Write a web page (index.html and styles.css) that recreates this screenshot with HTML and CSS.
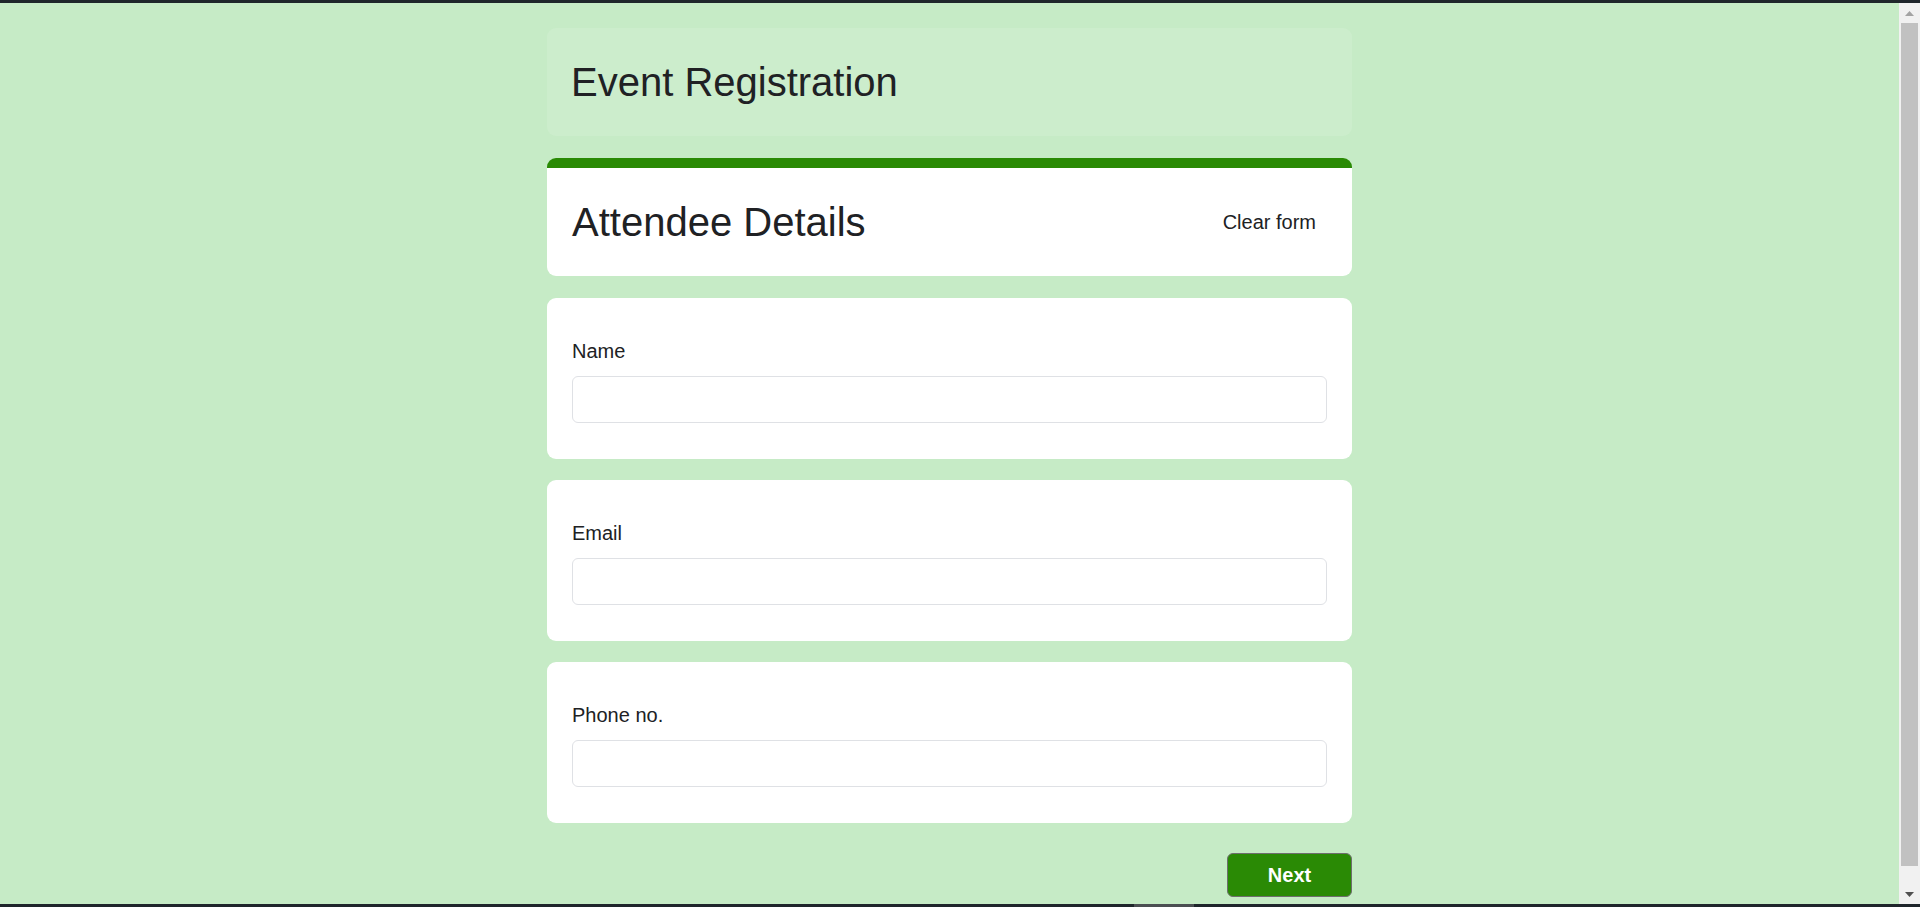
FILE: index.html
```html
<!DOCTYPE html>
<html lang="en">
<head>
<meta charset="utf-8">
<title>Event Registration</title>
<link rel="stylesheet" href="styles.css">
</head>
<body>
<div class="frame-top"></div>
<div class="screen">
  <main class="page">
    <div class="form">
      <header class="form-header">
        <h1 class="form-title">Event Registration</h1>
      </header>
      <section class="card section-card">
        <h2 class="section-title">Attendee Details</h2>
        <button class="clear-btn" type="button">Clear form</button>
      </section>
      <div class="card question">
        <label class="q-label" for="name">Name</label>
        <input class="q-input" id="name" type="text">
      </div>
      <div class="card question">
        <label class="q-label" for="email">Email</label>
        <input class="q-input" id="email" type="email">
      </div>
      <div class="card question">
        <label class="q-label" for="phone">Phone no.</label>
        <input class="q-input" id="phone" type="tel">
      </div>
      <div class="actions">
        <button class="next-btn" type="button">Next</button>
      </div>
    </div>
  </main>
  <div class="scrollbar">
    <div class="sb-btn">
      <svg width="9" height="5" viewBox="0 0 9 5"><polygon points="0,5 4.5,0 9,5" fill="#a3a3a3"/></svg>
    </div>
    <div class="sb-track"><div class="sb-thumb"></div></div>
    <div class="sb-btn">
      <svg width="9" height="5" viewBox="0 0 9 5"><polygon points="0,0 9,0 4.5,5" fill="#505050"/></svg>
    </div>
  </div>
</div>
<div class="frame-bottom"><span class="task-item"></span></div>
</body>
</html>
```

FILE: styles.css
```css
html, body {
  margin: 0;
  height: 100%;
}
body {
  display: flex;
  flex-direction: column;
  height: 100vh;
  overflow: hidden;
  background: #1f262b;
  font-family: "Liberation Sans", Arial, sans-serif;
  color: #202124;
}
.frame-top {
  flex: none;
  height: 3px;
  background: #1f262b;
}
.frame-bottom {
  flex: none;
  height: 3px;
  background: #1f262b;
  display: flex;
}
.task-item {
  margin-left: 1134px;
  width: 60px;
  background: #4b4f52;
}
.screen {
  flex: 1;
  min-height: 0;
  display: flex;
}
.page {
  flex: 1;
  background: #c6ebc6;
  overflow: hidden;
  padding-top: 25px;
}
.form {
  width: 805px;
  margin: 0 auto;
  display: flex;
  flex-direction: column;
}
.form-header {
  background: #ccedcc;
  border-radius: 9px;
  padding: 31px 24px;
  margin-bottom: 22px;
}
.form-title {
  margin: 0;
  font-size: 40px;
  font-weight: 400;
  line-height: 46px;
}
.card {
  background: #fff;
  border-radius: 9px;
}
.section-card {
  border-top: 10px solid #2a8a05;
  padding: 31px 25px;
  margin-bottom: 22px;
  display: flex;
  align-items: center;
  justify-content: space-between;
}
.section-title {
  margin: 0;
  font-size: 40px;
  font-weight: 400;
  line-height: 46px;
}
.clear-btn {
  font-family: inherit;
  font-size: 20px;
  line-height: 23px;
  color: #202124;
  background: none;
  border: 0;
  padding: 8px 11px;
  cursor: pointer;
}
.question {
  padding: 42px 25px 36px;
  margin-bottom: 21px;
}
.q-label {
  display: block;
  font-size: 20px;
  line-height: 23px;
  margin-bottom: 13px;
}
.q-input {
  display: block;
  box-sizing: border-box;
  width: 100%;
  height: 47px;
  border: 1px solid #dfe1e5;
  border-radius: 6px;
  padding: 0 12px;
  font-family: inherit;
  font-size: 16px;
  outline: none;
  background: #fff;
}
.actions {
  display: flex;
  justify-content: flex-end;
  margin-top: 9px;
}
.next-btn {
  width: 125px;
  height: 44px;
  box-sizing: border-box;
  background: #2a8a05;
  color: #fff;
  border: 1px solid #6e6e6e;
  border-radius: 6px;
  font-family: inherit;
  font-weight: 700;
  font-size: 20px;
  cursor: pointer;
}
.scrollbar {
  flex: none;
  width: 21px;
  background: #f1f1f1;
  display: flex;
  flex-direction: column;
}
.sb-btn {
  flex: none;
  height: 20px;
  display: flex;
  align-items: center;
  justify-content: center;
}
.sb-track {
  flex: 1;
  padding: 0 2px;
}
.sb-thumb {
  height: 843px;
  background: #c1c1c1;
}
```
